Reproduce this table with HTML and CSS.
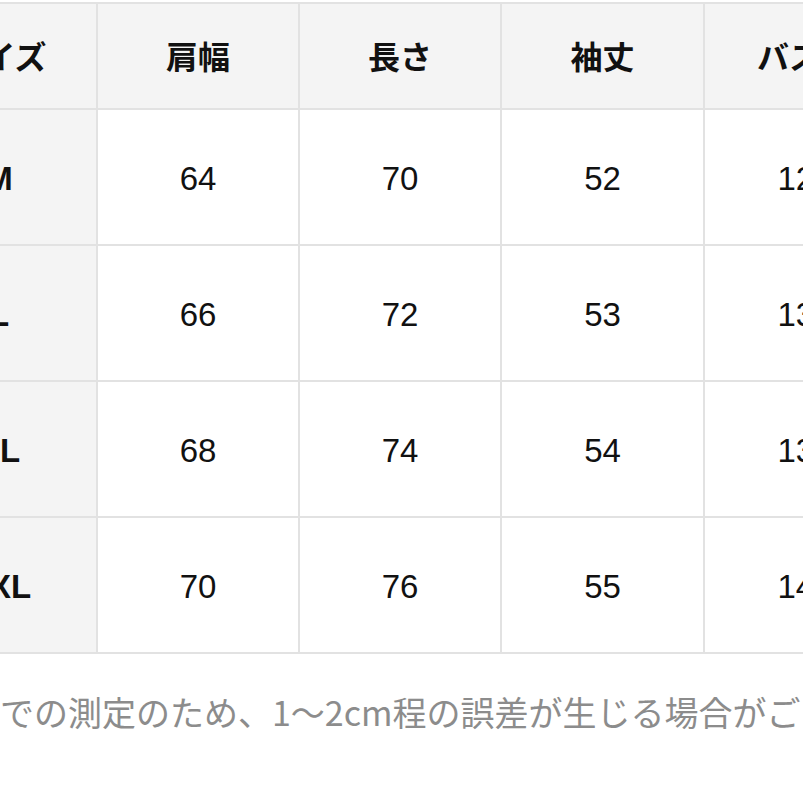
FILE: index.html
```html
<!DOCTYPE html>
<html lang="ja">
<head>
<meta charset="utf-8">
<link rel="stylesheet" href="styles.css">
</head>
<body>
<div class="page">
  <table class="size-table">
    <colgroup>
      <col class="c1"><col class="c2"><col class="c3"><col class="c4"><col class="c5">
    </colgroup>
    <thead>
      <tr>
        <th>サイズ</th><th>肩幅</th><th>長さ</th><th>袖丈</th><th>バスト</th>
      </tr>
    </thead>
    <tbody>
      <tr><th>M</th><td>64</td><td>70</td><td>52</td><td>124</td></tr>
      <tr><th>L</th><td>66</td><td>72</td><td>53</td><td>130</td></tr>
      <tr><th>XL</th><td>68</td><td>74</td><td>54</td><td>136</td></tr>
      <tr><th>XXL</th><td>70</td><td>76</td><td>55</td><td>142</td></tr>
    </tbody>
  </table>
  <p class="note">での測定のため、1〜2cm程の誤差が生じる場合がございます。</p>
</div>
</body>
</html>
```

FILE: styles.css
```css
html, body {
  margin: 0;
  padding: 0;
  background: #ffffff;
  overflow: hidden;
}
.page {
  width: 803px;
  height: 803px;
  overflow: hidden;
  padding-top: 2px;
  box-sizing: border-box;
}
.size-table {
  border-collapse: collapse;
  table-layout: fixed;
  width: 1005px;
  margin-left: -100px;
  font-family: "Liberation Sans", "Noto Sans CJK JP", sans-serif;
  color: #111111;
}
.c1 { width: 196px; }
.c2 { width: 202px; }
.c3 { width: 202px; }
.c4 { width: 203px; }
.c5 { width: 202px; }
.size-table th,
.size-table td {
  border: 2px solid #e2e2e2;
  text-align: center;
  vertical-align: middle;
  padding: 0;
  white-space: nowrap;
  overflow: hidden;
}
.size-table thead th {
  height: 102px;
  background: #f4f4f4;
  font-family: "Noto Sans CJK JP", sans-serif;
  font-weight: 700;
  font-size: 32px;
  padding-bottom: 2px;
}
.size-table tbody tr {
  height: 136px;
}
.size-table tbody th {
  background: #f4f4f4;
  font-weight: 700;
  font-size: 33px;
  padding-top: 3px;
}
.size-table tbody td {
  background: #ffffff;
  font-weight: 400;
  font-size: 33px;
  padding-top: 3px;
}
.note {
  margin: 38px 0 0 0;
  white-space: nowrap;
  font-family: "Noto Sans CJK JP", sans-serif;
  font-weight: 400;
  font-size: 34px;
  line-height: 40px;
  color: #8c8c8c;
}
```
